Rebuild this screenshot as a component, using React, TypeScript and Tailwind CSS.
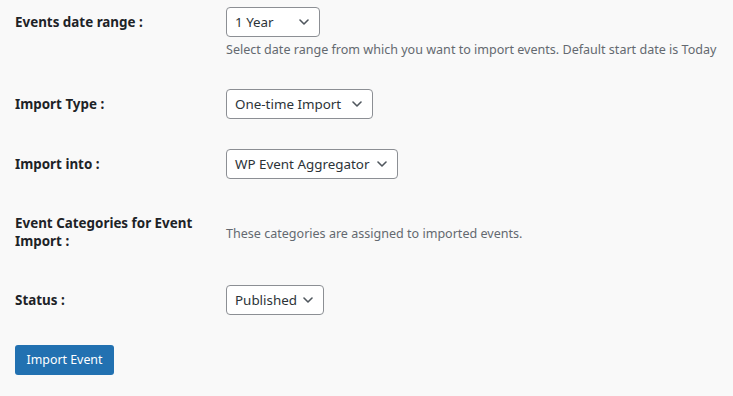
import React from 'react';

const Chevron = () => (
  <svg width="10" height="6" viewBox="0 0 10 6" className="shrink-0">
    <path d="M1 1l4 4 4-4" fill="none" stroke="#50575e" strokeWidth="1.6" strokeLinecap="round" strokeLinejoin="round" />
  </svg>
);

const Select = ({ value, width }: { value: string; width: string }) => (
  <div className={`flex h-[30px] items-center justify-between rounded-[4px] border border-[#8c8f94] bg-white pl-[8px] pr-[10px] text-[13.4px] text-[#2c3338] ${width}`}>
    <span className="whitespace-nowrap">{value}</span>
    <Chevron />
  </div>
);

const Label = ({ children }: { children: React.ReactNode }) => (
  <div className="w-[211px] shrink-0 text-[13.4px] font-bold leading-[30px]">{children}</div>
);

export default function App() {
  return (
    <div
      className="min-h-screen bg-[#f9f9f9] px-[15px] pt-[7px] text-[#1d2327]"
      style={{ fontFamily: '"Noto Sans", "Open Sans", sans-serif' }}
    >
      <div className="flex">
        <Label>Events date range :</Label>
        <div>
          <Select value="1 Year" width="w-[94px]" />
          <p className="mt-[4px] whitespace-nowrap text-[12.55px] leading-[18px] text-[#646970]">
            Select date range from which you want to import events. Default start date is Today
          </p>
        </div>
      </div>

      <div className="mt-[30px] flex">
        <Label>Import Type :</Label>
        <Select value="One-time Import" width="w-[147px]" />
      </div>

      <div className="mt-[30px] flex">
        <Label>Import into :</Label>
        <Select value="WP Event Aggregator" width="w-[172px]" />
      </div>

      <div className="mt-[35px] flex">
        <div className="w-[211px] shrink-0 pr-[10px] text-[13.4px] font-bold leading-[18px]">
          Event Categories for Event Import :
        </div>
        <p className="pt-[11px] text-[12.55px] leading-[18px] text-[#646970]">
          These categories are assigned to imported events.
        </p>
      </div>

      <div className="mt-[35px] flex">
        <Label>Status :</Label>
        <Select value="Published" width="w-[98px]" />
      </div>

      <button className="mt-[30px] h-[30px] w-[99px] rounded-[3px] bg-[#2271b1] text-[12.4px] text-white">
        Import Event
      </button>
    </div>
  );
}
